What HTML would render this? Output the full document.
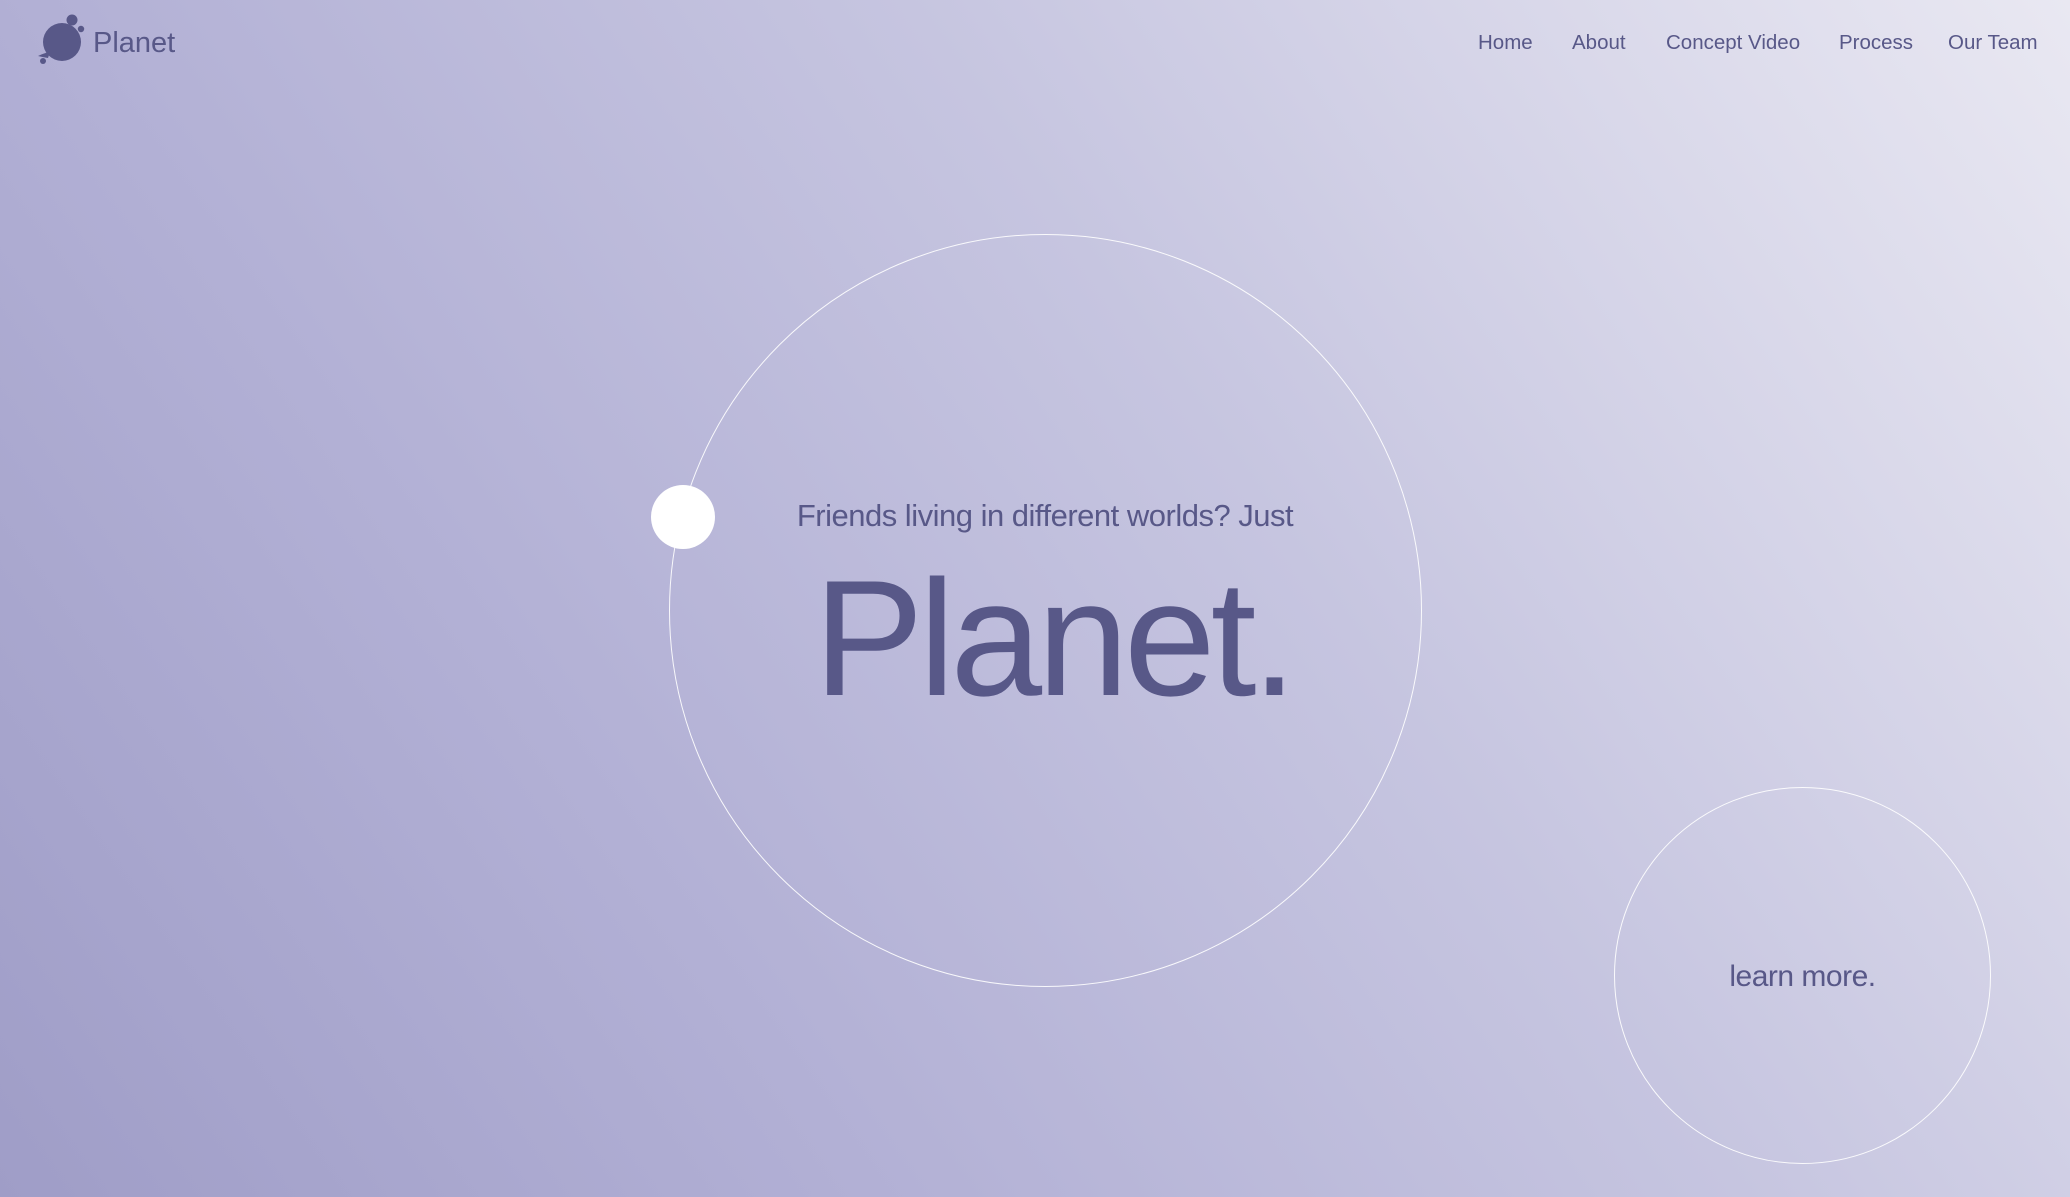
<!DOCTYPE html>
<html><head><meta charset="utf-8"><style>
html,body{margin:0;padding:0;}
body{width:2070px;height:1197px;overflow:hidden;position:relative;
background:linear-gradient(55deg,#9f9dc7 0%,#b2b0d5 30%,#c6c5e0 60%,#e9e8f2 100%);
font-family:"Liberation Sans",sans-serif;color:#585888;}
.nav a{position:absolute;top:31px;font-size:20.5px;color:#585888;text-decoration:none;white-space:nowrap;}
.circle{position:absolute;border:1.5px solid rgba(255,255,255,.9);border-radius:50%;box-sizing:border-box;}
</style></head><body>
<svg style="position:absolute;left:34px;top:12px" width="56" height="56" viewBox="0 0 56 56">
<circle cx="28" cy="30" r="19" fill="#585888"/>
<circle cx="38" cy="8" r="5.5" fill="#585888"/>
<circle cx="47" cy="17" r="3.2" fill="#585888"/>
<circle cx="9" cy="49" r="3" fill="#585888"/>
<path d="M4 44 Q10 41 16 40 L14 46 Q8 45 4 44Z" fill="#585888"/>
</svg>
<div style="position:absolute;left:93px;top:27px;font-size:29px;">Planet</div>
<div class="nav">
<a style="left:1478px">Home</a>
<a style="left:1572px">About</a>
<a style="left:1666px">Concept Video</a>
<a style="left:1839px">Process</a>
<a style="left:1948px">Our Team</a>
</div>
<div class="circle" style="left:669px;top:234px;width:753px;height:753px;"></div>
<div style="position:absolute;left:651px;top:485px;width:64px;height:64px;border-radius:50%;background:#fff;"></div>
<div style="position:absolute;left:645px;width:800px;top:498px;text-align:center;font-size:31px;letter-spacing:-0.5px;">Friends living in different worlds? Just</div>
<div style="position:absolute;left:645px;width:816px;top:538px;text-align:center;font-size:165px;letter-spacing:-5px;line-height:200px;">Planet.</div>
<div class="circle" style="left:1614px;top:787px;width:377px;height:377px;"></div>
<div style="position:absolute;left:1614px;width:377px;top:960px;text-align:center;font-size:30px;letter-spacing:-0.5px;">learn more.</div>
</body></html>
